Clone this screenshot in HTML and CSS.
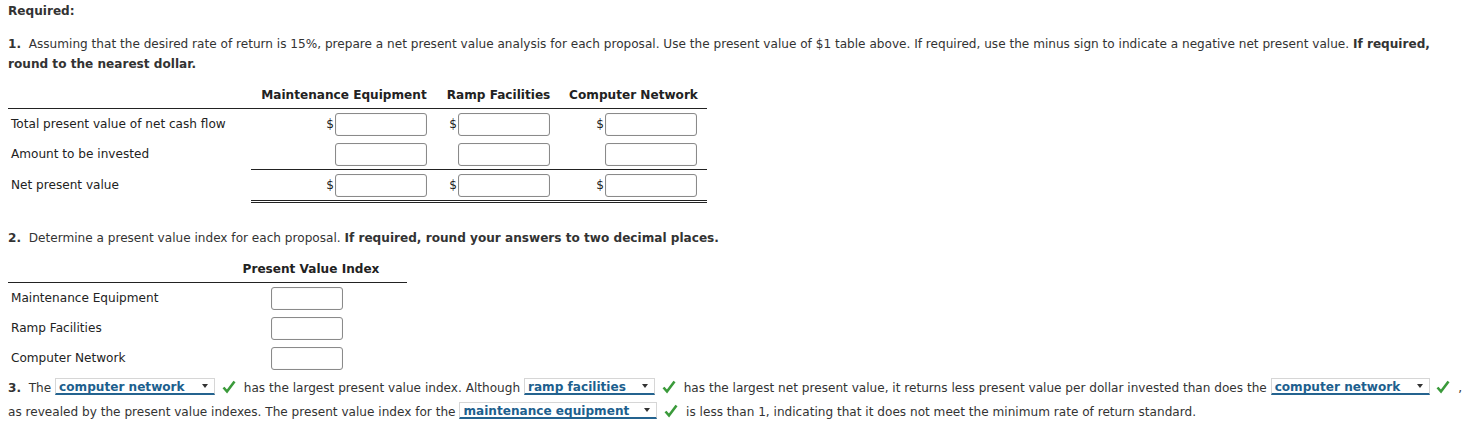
FILE: index.html
```html
<!DOCTYPE html>
<html>
<head>
<meta charset="utf-8">
<link rel="stylesheet" href="styles.css">
</head>
<body>
<div class="page">
  <div class="required">Required:</div>

  <p class="q q1"><b>1.</b>&nbsp; Assuming that the desired rate of return is 15%, prepare a net present value analysis for each proposal. Use the present value of $1 table above. If required, use the minus sign to indicate a negative net present value. <b>If required, round to the nearest dollar.</b></p>

  <div class="npv">
    <div class="hcell"></div>
    <div class="hcell c">Maintenance Equipment</div>
    <div class="hcell c">Ramp Facilities</div>
    <div class="hcell c">Computer Network</div>

    <div class="lbl">Total present value of net cash flow</div>
    <div class="cell"><span class="dol">$</span><span class="box"></span></div>
    <div class="cell"><span class="dol">$</span><span class="box"></span></div>
    <div class="cell"><span class="dol">$</span><span class="box"></span></div>

    <div class="lbl">Amount to be invested</div>
    <div class="cell"><span class="box"></span></div>
    <div class="cell"><span class="box"></span></div>
    <div class="cell"><span class="box"></span></div>

    <div class="lbl last">Net present value</div>
    <div class="cell tot"><span class="dol">$</span><span class="box"></span></div>
    <div class="cell tot"><span class="dol">$</span><span class="box"></span></div>
    <div class="cell tot"><span class="dol">$</span><span class="box"></span></div>
  </div>

  <p class="q q2"><b>2.</b>&nbsp; Determine a present value index for each proposal. <b>If required, round your answers to two decimal places.</b></p>

  <div class="pvi">
    <div class="hcell"></div>
    <div class="hcell c">Present Value Index</div>
    <div class="lbl">Maintenance Equipment</div>
    <div class="cell2"><span class="box sm"></span></div>
    <div class="lbl">Ramp Facilities</div>
    <div class="cell2"><span class="box sm"></span></div>
    <div class="lbl">Computer Network</div>
    <div class="cell2"><span class="box sm"></span></div>
  </div>

  <p class="q q3"><b>3.</b>&nbsp; The <span class="dd w1">computer network<i class="arr"></i></span> <svg class="chk" viewBox="0 0 14 14"><path d="M1.5 7.5 L5 11.5 L12.5 1.5" fill="none" stroke="#3a9a3a" stroke-width="2.6"/></svg> has the largest present value index. Although <span class="dd w2">ramp facilities<i class="arr"></i></span> <svg class="chk" viewBox="0 0 14 14"><path d="M1.5 7.5 L5 11.5 L12.5 1.5" fill="none" stroke="#3a9a3a" stroke-width="2.6"/></svg> has the largest net present value, it returns less present value per dollar invested than does the <span class="dd w3">computer network<i class="arr"></i></span> <span class="nw"><svg class="chk" viewBox="0 0 14 14"><path d="M1.5 7.5 L5 11.5 L12.5 1.5" fill="none" stroke="#3a9a3a" stroke-width="2.6"/></svg> ,</span> as revealed by the present value indexes. The present value index for the <span class="dd w4">maintenance equipment<i class="arr"></i></span> <svg class="chk" viewBox="0 0 14 14"><path d="M1.5 7.5 L5 11.5 L12.5 1.5" fill="none" stroke="#3a9a3a" stroke-width="2.6"/></svg> is less than 1, indicating that it does not meet the minimum rate of return standard.</p>
</div>
</body>
</html>
```

FILE: styles.css
```css
html, body {
  margin: 0;
  padding: 0;
  background: #fff;
}
body {
  font-family: "DejaVu Sans", Verdana, sans-serif;
  font-size: 12.1px;
  color: #333;
}
.page {
  padding: 1px 0 0 8px;
}
.required {
  font-weight: bold;
  line-height: 20px;
}
.q {
  margin: 0;
  line-height: 20px;
}
.q1 {
  margin-top: 13px;
}
.npv {
  display: grid;
  grid-template-columns: 243px 186px 123px 147px;
  width: 699px;
  margin-top: 10px;
  color: #222;
}
.hcell {
  font-weight: bold;
  line-height: 20px;
  padding: 1px 0 3px;
  border-bottom: 1px solid #222;
  white-space: nowrap;
}
.c { text-align: center; }
.lbl {
  line-height: 30px;
  padding-left: 3px;
  height: 30px;
  white-space: nowrap;
}
.lbl.last {
  height: 31px;
  line-height: 33px;
}
.cell {
  display: flex;
  justify-content: flex-end;
  align-items: center;
  padding-right: 10px;
  height: 30px;
}
.cell.tot {
  border-top: 1px solid #222;
  border-bottom: 3px double #222;
}
.dol {
  margin-right: 1px;
}
.box {
  display: inline-block;
  width: 90px;
  height: 21px;
  border: 1px solid #8a8a8a;
  border-radius: 3px;
  box-shadow: inset 0 0 1px #ccc;
  background: #fff;
}
.q2 {
  margin-top: 25px;
}
.pvi {
  display: grid;
  grid-template-columns: 207px 192px;
  width: 399px;
  margin-top: 10px;
  color: #222;
}
.cell2 {
  display: flex;
  align-items: center;
  padding-left: 56px;
  height: 30px;
}
.box.sm {
  width: 70px;
}
.q3 {
  margin-top: 3px;
  margin-right: -12px;
  line-height: 24px;
}
.nw {
  white-space: nowrap;
}
.dd {
  display: inline-block;
  position: relative;
  box-sizing: border-box;
  height: 17px;
  line-height: 16px;
  vertical-align: -3px;
  padding-left: 3px;
  border: 1px solid #d6d6d6;
  border-bottom: 2px solid #24638f;
  color: #1d5f8e;
  font-weight: bold;
  white-space: nowrap;
  overflow: hidden;
}
.w1 { width: 160px; }
.w2 { width: 131px; }
.w3 { width: 159px; }
.w4 { width: 198px; }
.arr {
  position: absolute;
  right: 6px;
  top: 5px;
  width: 0;
  height: 0;
  border-left: 3px solid transparent;
  border-right: 3px solid transparent;
  border-top: 4px solid #333;
}
.chk {
  width: 14px;
  height: 14px;
  vertical-align: -2px;
  margin: 0 4px 0 3px;
}
```
